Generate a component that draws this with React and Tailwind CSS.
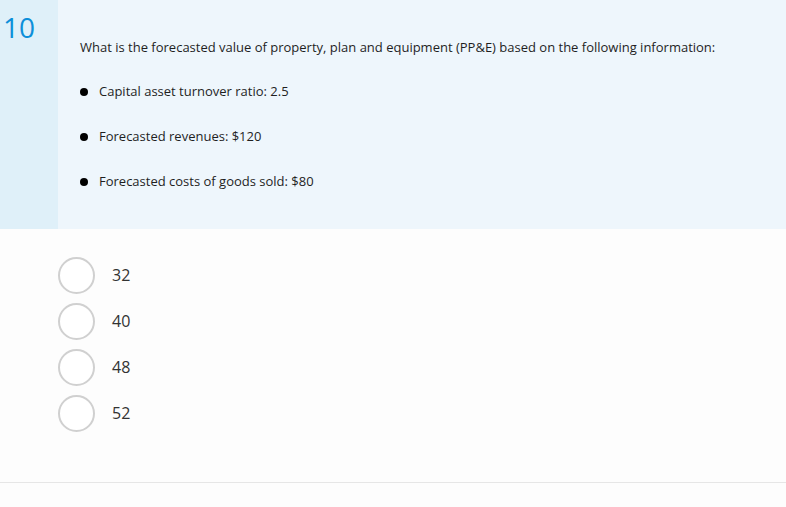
import React from "react";

const FACTS = [
  "Capital asset turnover ratio: 2.5",
  "Forecasted revenues: $120",
  "Forecasted costs of goods sold: $80",
];

const CHOICES = ["32", "40", "48", "52"];

function Choice({ label }) {
  return (
    <label className="flex h-[46px] items-center">
      <span className="h-[37px] w-[37px] rounded-full border-2 border-[#d0d0d0] bg-white" />
      <span className="ml-[17px] text-[16px] text-[#333]">{label}</span>
    </label>
  );
}

export default function App() {
  return (
    <div
      className="min-h-[507px] bg-[#fdfdfd]"
      style={{ fontFamily: '"Open Sans", "Noto Sans", sans-serif' }}
    >
      <div className="flex h-[229px]">
        <div className="w-[58px] bg-[#dff0f9] pl-[3px] pt-[9px]">
          <span className="text-[28px] font-medium leading-[36px] text-[#0d8fd9]">10</span>
        </div>
        <div className="flex-1 bg-[#eef6fc] pl-[22px] pt-[37px]">
          <p className="text-[13px] leading-[20px] text-[#1f1f1f]">
            What is the forecasted value of property, plan and equipment (PP&amp;E) based on the
            following information:
          </p>
          <ul className="mt-[25px] flex flex-col gap-[25px]">
            {FACTS.map((fact) => (
              <li key={fact} className="flex h-[20px] items-center text-[13px] text-[#1f1f1f]">
                <span className="h-[8px] w-[8px] rounded-full bg-black" />
                <span className="ml-[11px]">{fact}</span>
              </li>
            ))}
          </ul>
        </div>
      </div>
      <div className="pl-[58px] pt-[23px]">
        {CHOICES.map((choice) => (
          <Choice key={choice} label={choice} />
        ))}
      </div>
      <div className="mt-[46px] border-t border-[#e6e6e6]" />
    </div>
  );
}
